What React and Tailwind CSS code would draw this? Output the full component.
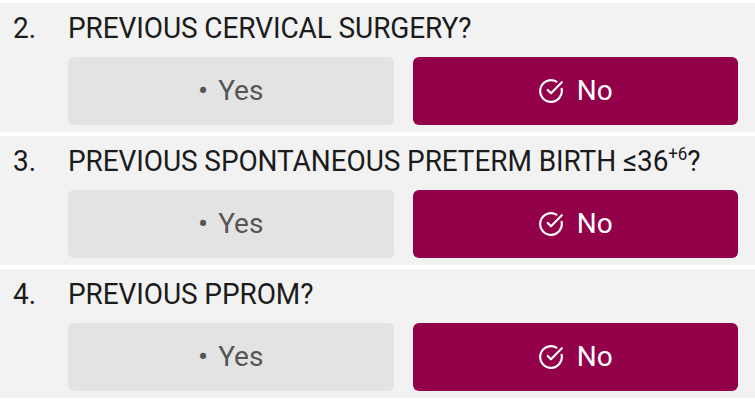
import { CircleCheckBig } from "lucide-react";

const questions = [
    { n: "2.", title: <>PREVIOUS CERVICAL SURGERY?</> },
    {
        n: "3.",
        title: (
            <>
                PREVIOUS SPONTANEOUS PRETERM BIRTH ≤36
                <span className="text-[17px] relative -top-[10px]">+6</span>?
            </>
        ),
    },
    { n: "4.", title: <>PREVIOUS PPROM?</> },
];

const Question = ({ n, title }) => {
    return (
        <section className="bg-[#f2f2f2] pt-[9px] pb-[7px]">
            <div className="flex items-center h-[32px] text-[28px] text-[#1b1b1b] leading-none tracking-[-0.1px] scale-y-[1.08]">
                <span className="w-[68px] pl-[13px]">{n}</span>
                <span>{title}</span>
            </div>
            <div className="flex gap-[19px] mt-[13px] pl-[68px] pr-[17px]">
                <button className="flex-1 h-[68px] rounded-md bg-[#e3e3e3] text-[#555] text-[28px] flex items-center justify-center gap-[10px]">
                    <span className="text-[30px] leading-none">•</span>
                    <span>Yes</span>
                </button>
                <button className="flex-1 h-[68px] rounded-md bg-[#93004a] text-white text-[28px] flex items-center justify-center gap-[13px]">
                    <CircleCheckBig size={26} strokeWidth={2} />
                    <span>No</span>
                </button>
            </div>
        </section>
    );
};

const App = () => {
    return (
        <div className="w-[755px] h-[406px] bg-white pt-[3px] flex flex-col gap-[4px] font-['Roboto',sans-serif]">
            {questions.map((q) => (
                <Question key={q.n} n={q.n} title={q.title} />
            ))}
        </div>
    );
};

export default App;
